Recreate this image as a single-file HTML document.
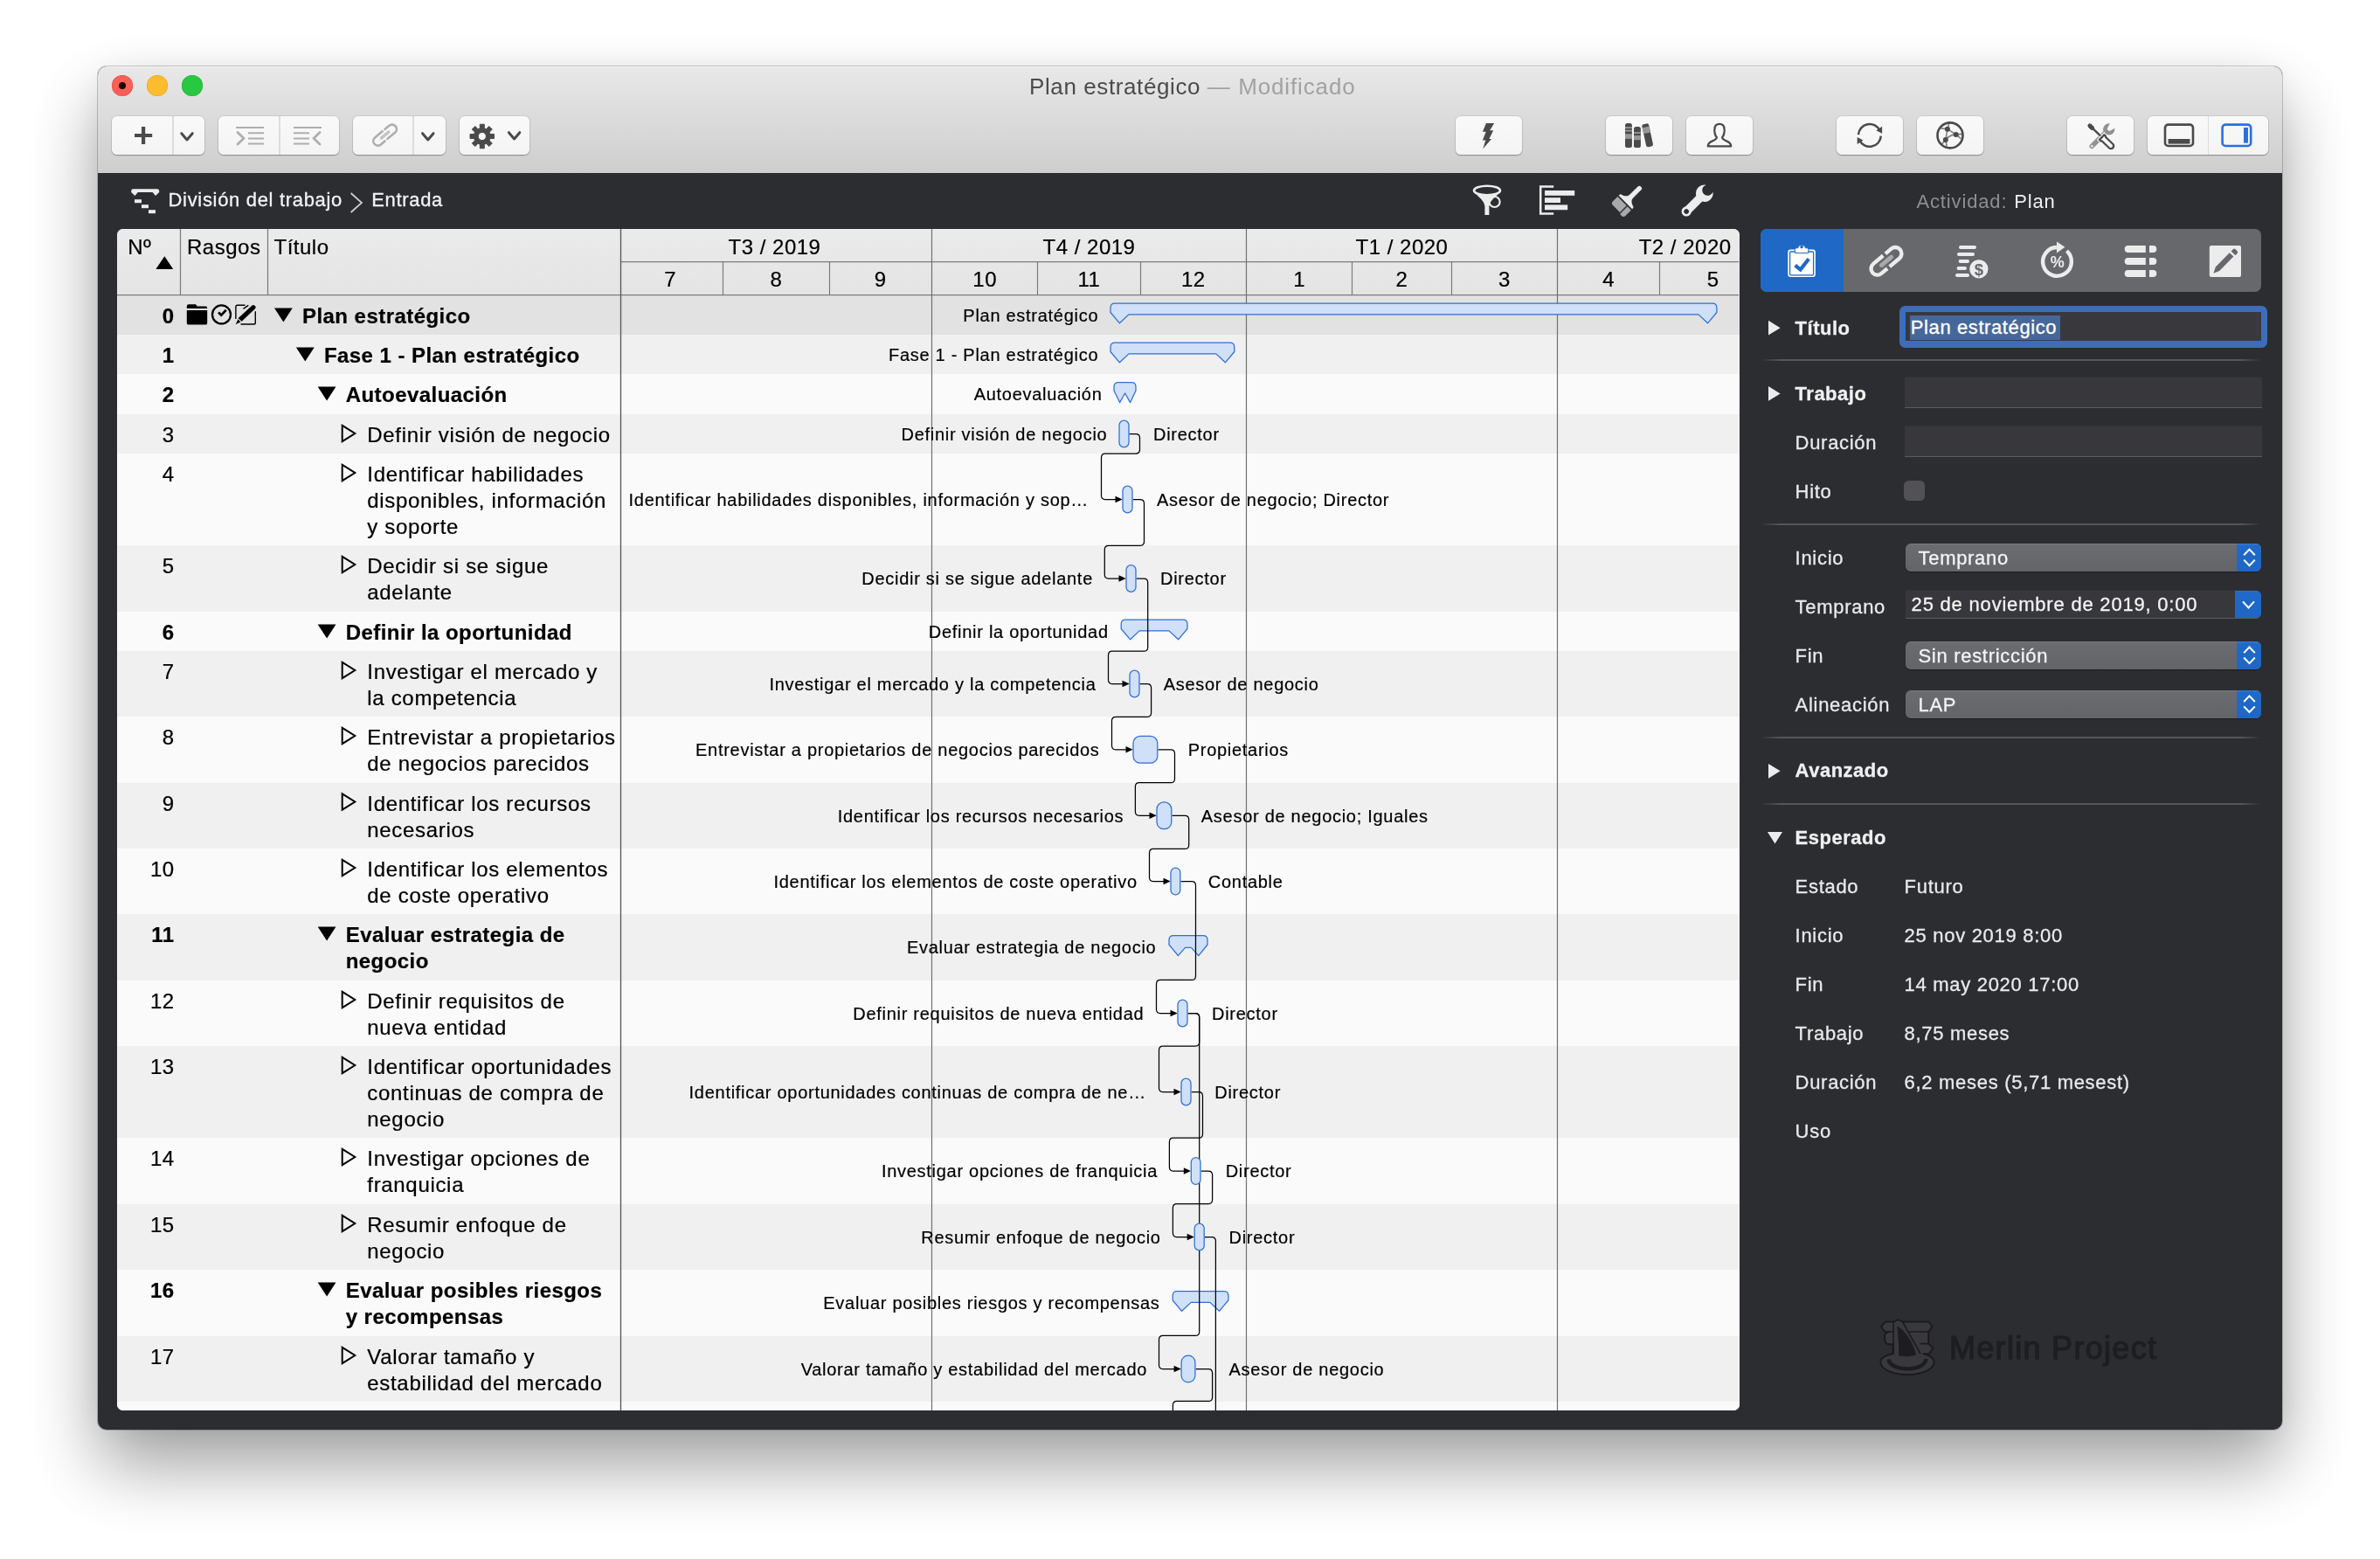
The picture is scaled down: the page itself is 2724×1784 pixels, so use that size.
<!DOCTYPE html>
<html lang="es"><head><meta charset="utf-8"><title>Plan estratégico</title>
<style>
*{box-sizing:border-box;margin:0;padding:0}
html,body{width:2724px;height:1784px;overflow:hidden;background:#fff}
body{position:relative;font-family:"Liberation Sans",sans-serif;color:#000}
.abs{position:absolute}
#root{position:absolute;left:0;top:0;width:2724px;height:1784px;opacity:.999}
#win{position:absolute;left:112px;top:76px;width:2500px;height:1560px;border-radius:10px;background:#2c2d31;
 box-shadow:0 0 0 1px rgba(0,0,0,.2),0 41px 82px rgba(0,0,0,.38),0 2px 40px rgba(0,0,0,.05);overflow:hidden}
#tb{position:absolute;left:0;top:0;width:2500px;height:122px;background:linear-gradient(#e8e8e8,#dcdcdc 45%,#cecece);border-top:1px solid #f4f4f4}
.tl{position:absolute;top:86px;width:24px;height:24px;border-radius:12px}
.title{position:absolute;top:83px;font-size:26px;color:#4b4b4b;line-height:32px;white-space:pre}
.btn{position:absolute;top:133px;height:44px;border-radius:5.8px;background:linear-gradient(#f9f9f9,#f4f4f4);box-shadow:0 0 0 1px rgba(0,0,0,.07),0 1px 1.2px rgba(0,0,0,.3)}
.btn i{position:absolute;top:0;width:1.5px;height:44px;background:#dcdcdc}
.btn svg{position:absolute;left:0;top:0}
.crumb{-webkit-text-stroke:.3px #f2f2f2;position:absolute;left:192.5px;top:215px;font-size:22px;letter-spacing:.68px;color:#f2f2f2;line-height:28px;white-space:pre}
.act{position:absolute;left:2193.5px;top:217px;font-size:22px;letter-spacing:.85px;color:#8e8e92;line-height:28px;white-space:pre}
.act b{font-weight:normal;color:#f0f0f0}
#table{position:absolute;left:134px;top:262px;width:1856.5px;height:1352px;border-radius:7px;background:#fafafa;overflow:hidden}
.row{position:absolute;left:0;width:1856.5px}
.num{-webkit-text-stroke:.22px;position:absolute;left:0;width:65.6px;text-align:right;font-size:24px;line-height:30px;letter-spacing:.4px;white-space:pre}
.ttl{-webkit-text-stroke:.22px;position:absolute;font-size:24px;line-height:29.9px;letter-spacing:.68px;white-space:pre}
.b{font-weight:bold;letter-spacing:.45px}
.hd{-webkit-text-stroke:.22px;position:absolute;font-size:24px;line-height:30px;letter-spacing:.5px;white-space:pre}
.ins{-webkit-text-stroke:.3px;position:absolute;font-size:22px;line-height:28px;letter-spacing:.7px;color:#e9e9e9;white-space:pre}
.insb{font-weight:bold;letter-spacing:.5px;color:#f0f0f0}
.sep{position:absolute;left:2015px;width:573px;height:2px;background:linear-gradient(90deg,rgba(90,90,95,0),#55555a 4%,#55555a 96%,rgba(90,90,95,0))}
.fld{position:absolute;background:#38383c;border-bottom:1.5px solid #5b5b60;border-top:1px solid #323236}
.pop{position:absolute;left:2181px;width:407px;height:32px;border-radius:6px;background:linear-gradient(#7e7f83,#6b6c70 5%,#636468);box-shadow:0 1px 1px rgba(0,0,0,.35);overflow:hidden}
.pop u{position:absolute;right:0;top:0;width:28.5px;height:32px;background:linear-gradient(#3578d6,#2069c9 8%,#1f66c4)}
.pop span{-webkit-text-stroke:.3px;position:absolute;left:14.5px;top:2.8px;font-size:22px;line-height:28px;letter-spacing:.7px;color:#f3f3f3;white-space:pre}
</style></head>
<body>
<div id="root">
<div id="win"><div id="tb"></div></div>
<div class="tl" style="left:128px;background:#fc5f57;box-shadow:inset 0 0 0 .5px #e2463f"></div>
<div class="abs" style="left:136.1px;top:94.1px;width:7.8px;height:7.8px;border-radius:4px;background:#1d0705"></div>
<div class="tl" style="left:168px;background:#fdbc2e;box-shadow:inset 0 0 0 .5px #dfa023"></div>
<div class="tl" style="left:208px;background:#28c840;box-shadow:inset 0 0 0 .5px #1dad2c"></div>
<div class="title" style="left:1178px;letter-spacing:.6px">Plan estratégico</div><div class="title" style="left:1381.8px;color:#a2a2a2">—</div><div class="title" style="left:1417.2px;letter-spacing:.86px;color:#a2a2a2">Modificado</div>
<div class="btn" style="left:128px;width:106px"><i style="left:69px"></i></div>
<div class="btn" style="left:249.5px;width:138.5px"><i style="left:69.5px"></i></div>
<div class="btn" style="left:403.7px;width:106.3px"><i style="left:68.8px"></i></div>
<div class="btn" style="left:525.7px;width:80.3px"></div>
<div class="btn" style="left:1666px;width:76px"></div>
<div class="btn" style="left:1838px;width:76px"></div>
<div class="btn" style="left:1930px;width:76px"></div>
<div class="btn" style="left:2102px;width:76px"></div>
<div class="btn" style="left:2194px;width:76px"></div>
<div class="btn" style="left:2366px;width:76px"></div>
<div class="btn" style="left:2458px;width:138.2px"><i style="left:68.7px"></i></div>
<div class="crumb">División del trabajo</div>
<div class="crumb" style="left:425.2px">Entrada</div>
<div class="act">Actividad:</div><div class="act" style="left:2305.2px;color:#f0f0f0">Plan</div>
<div id="table">
<div class="row" style="top:0;height:75px;background:linear-gradient(#ebebeb,#e4e4e4)"></div>
<div class="row" style="top:76px;height:45.5px;background:#e2e2e2"></div>
<div class="row" style="top:121px;height:45.5px;background:#f0f0f0"></div>
<div class="row" style="top:166px;height:46.5px;background:#fafafa"></div>
<div class="row" style="top:212px;height:45.5px;background:#f0f0f0"></div>
<div class="row" style="top:257px;height:105.5px;background:#fafafa"></div>
<div class="row" style="top:362px;height:76.5px;background:#f0f0f0"></div>
<div class="row" style="top:438px;height:45.5px;background:#fafafa"></div>
<div class="row" style="top:483px;height:75.5px;background:#f0f0f0"></div>
<div class="row" style="top:558px;height:76.0px;background:#fafafa"></div>
<div class="row" style="top:633.5px;height:76.0px;background:#f0f0f0"></div>
<div class="row" style="top:709px;height:75.5px;background:#fafafa"></div>
<div class="row" style="top:784px;height:76.5px;background:#f0f0f0"></div>
<div class="row" style="top:860px;height:75.5px;background:#fafafa"></div>
<div class="row" style="top:935px;height:105.5px;background:#f0f0f0"></div>
<div class="row" style="top:1040px;height:76.5px;background:#fafafa"></div>
<div class="row" style="top:1116px;height:75.5px;background:#f0f0f0"></div>
<div class="row" style="top:1191px;height:76.5px;background:#fafafa"></div>
<div class="row" style="top:1267px;height:75.5px;background:#f0f0f0"></div>
<div class="row" style="top:1342px;height:10.5px;background:#fafafa"></div>
<div class="hd" style="left:12.199999999999989px;top:6.199999999999989px">Nº</div>
<div class="hd" style="left:80px;top:6.199999999999989px">Rasgos</div>
<div class="hd" style="left:179.5px;top:6.199999999999989px">Título</div>
<div class="num b" style="top:85.2px">0</div>
<div class="ttl b" style="left:212.00000000000003px;top:85.2px">Plan estratégico</div>
<div class="num b" style="top:130.2px">1</div>
<div class="ttl b" style="left:236.9px;top:130.2px">Fase 1 - Plan estratégico</div>
<div class="num b" style="top:175.2px">2</div>
<div class="ttl b" style="left:261.7px;top:175.2px">Autoevaluación</div>
<div class="num" style="top:221.2px">3</div>
<div class="ttl" style="left:286.29999999999995px;top:221.2px">Definir visión de negocio</div>
<div class="num" style="top:266.2px">4</div>
<div class="ttl" style="left:286.29999999999995px;top:266.2px">Identificar habilidades<br>disponibles, información<br>y soporte</div>
<div class="num" style="top:371.2px">5</div>
<div class="ttl" style="left:286.29999999999995px;top:371.2px">Decidir si se sigue<br>adelante</div>
<div class="num b" style="top:447.2px">6</div>
<div class="ttl b" style="left:261.7px;top:447.2px">Definir la oportunidad</div>
<div class="num" style="top:492.2px">7</div>
<div class="ttl" style="left:286.29999999999995px;top:492.2px">Investigar el mercado y<br>la competencia</div>
<div class="num" style="top:567.2px">8</div>
<div class="ttl" style="left:286.29999999999995px;top:567.2px">Entrevistar a propietarios<br>de negocios parecidos</div>
<div class="num" style="top:642.7px">9</div>
<div class="ttl" style="left:286.29999999999995px;top:642.7px">Identificar los recursos<br>necesarios</div>
<div class="num" style="top:718.2px">10</div>
<div class="ttl" style="left:286.29999999999995px;top:718.2px">Identificar los elementos<br>de coste operativo</div>
<div class="num b" style="top:793.2px">11</div>
<div class="ttl b" style="left:261.7px;top:793.2px">Evaluar estrategia de<br>negocio</div>
<div class="num" style="top:869.2px">12</div>
<div class="ttl" style="left:286.29999999999995px;top:869.2px">Definir requisitos de<br>nueva entidad</div>
<div class="num" style="top:944.2px">13</div>
<div class="ttl" style="left:286.29999999999995px;top:944.2px">Identificar oportunidades<br>continuas de compra de<br>negocio</div>
<div class="num" style="top:1049.2px">14</div>
<div class="ttl" style="left:286.29999999999995px;top:1049.2px">Investigar opciones de<br>franquicia</div>
<div class="num" style="top:1125.2px">15</div>
<div class="ttl" style="left:286.29999999999995px;top:1125.2px">Resumir enfoque de<br>negocio</div>
<div class="num b" style="top:1200.2px">16</div>
<div class="ttl b" style="left:261.7px;top:1200.2px">Evaluar posibles riesgos<br>y recompensas</div>
<div class="num" style="top:1276.2px">17</div>
<div class="ttl" style="left:286.29999999999995px;top:1276.2px">Valorar tamaño y<br>estabilidad del mercado</div>
</div>
<div class="abs" style="left:2015px;top:262px;width:573px;height:72.3px;border-radius:7px;background:#67686c;overflow:hidden"><div class="abs" style="left:0;top:0;width:95.2px;height:73px;background:#1f68c5"></div></div>
<div class="ins insb" style="left:2054.6px;top:361.5px">Título</div>
<div class="ins insb" style="left:2054.6px;top:437.0px">Trabajo</div>
<div class="ins" style="left:2054.6px;top:493.1px">Duración</div>
<div class="ins" style="left:2054.6px;top:548.9px">Hito</div>
<div class="ins" style="left:2054.6px;top:624.6px">Inicio</div>
<div class="ins" style="left:2054.6px;top:681.0px">Temprano</div>
<div class="ins" style="left:2054.6px;top:736.5px">Fin</div>
<div class="ins" style="left:2054.6px;top:792.9px">Alineación</div>
<div class="ins insb" style="left:2054.6px;top:868.4px">Avanzado</div>
<div class="ins insb" style="left:2054.6px;top:944.9px">Esperado</div>
<div class="ins" style="left:2054.6px;top:1000.7px">Estado</div>
<div class="ins" style="left:2179.6px;top:1000.7px">Futuro</div>
<div class="ins" style="left:2054.6px;top:1056.7px">Inicio</div>
<div class="ins" style="left:2179.6px;top:1056.7px">25 nov 2019 8:00</div>
<div class="ins" style="left:2054.6px;top:1112.7px">Fin</div>
<div class="ins" style="left:2179.6px;top:1112.7px">14 may 2020 17:00</div>
<div class="ins" style="left:2054.6px;top:1168.7px">Trabajo</div>
<div class="ins" style="left:2179.6px;top:1168.7px">8,75 meses</div>
<div class="ins" style="left:2054.6px;top:1224.7px">Duración</div>
<div class="ins" style="left:2179.6px;top:1224.7px">6,2 meses (5,71 mesest)</div>
<div class="ins" style="left:2054.6px;top:1280.7px">Uso</div>
<div class="abs" style="left:2174.2px;top:350px;width:420.6px;height:48px;border-radius:6.5px;background:#3f6db6"></div>
<div class="abs" style="left:2181.2px;top:357.3px;width:406.6px;height:33.2px;background:#39393d;box-shadow:0 0 0 1.6px #2a70dc"></div>
<div class="abs" style="left:2185.7px;top:360.9px;width:172.1px;height:28.2px;background:#46679a"></div>
<div class="ins" style="left:2186.8px;top:361.2px;color:#fff;letter-spacing:.6px">Plan estratégico</div>
<div class="fld" style="left:2180px;top:431.3px;width:409px;height:35.6px"></div>
<div class="fld" style="left:2180px;top:487.4px;width:409px;height:35.6px"></div>
<div class="abs" style="left:2179.3px;top:550px;width:23.4px;height:23.4px;border-radius:5.5px;background:#525256"></div>
<div class="sep" style="top:410.7px"></div>
<div class="sep" style="top:599px"></div>
<div class="sep" style="top:843px"></div>
<div class="sep" style="top:918.8px"></div>
<div class="pop" style="top:622.4px"><span>Temprano</span><u></u></div>
<div class="pop" style="top:734.3px"><span>Sin restricción</span><u></u></div>
<div class="pop" style="top:790.2px"><span>LAP</span><u></u></div>
<div class="fld" style="left:2181px;top:675.2px;width:407px;height:32.8px;border-radius:0 6px 6px 0;overflow:hidden"><div class="abs" style="right:0;top:-1px;width:30px;height:33.5px;background:linear-gradient(#3578d6,#2069c9 8%,#1f66c4);border-radius:0 6px 6px 0"></div></div>
<div class="ins" style="left:2187.6px;top:677.9px;color:#f3f3f3;letter-spacing:.8px">25 de noviembre de 2019, 0:00</div>
<div class="abs" style="left:2231px;top:1520.5px;font-size:36px;letter-spacing:1.3px;color:#1e1e21;-webkit-text-stroke:1.25px #1e1e21;line-height:44px;white-space:pre">Merlin Project</div>
<svg class="abs" style="left:0;top:0" width="2724" height="1784" viewBox="0 0 2724 1784">
<defs><clipPath id="tc"><rect x="134" y="262" width="1856.5" height="1352" rx="7"/></clipPath></defs>
<g clip-path="url(#tc)"><path d="M314.0 352.6h20.8l-10.4 15.8z" fill="#000"/>
<path d="M338.9 397.6h20.8l-10.4 15.8z" fill="#000"/>
<path d="M363.7 442.6h20.8l-10.4 15.8z" fill="#000"/>
<path d="M391.7 486.8v18.4l14.6 -9.2z" fill="none" stroke="#000" stroke-width="2" stroke-linejoin="miter"/>
<path d="M391.7 531.8v18.4l14.6 -9.2z" fill="none" stroke="#000" stroke-width="2" stroke-linejoin="miter"/>
<path d="M391.7 636.8v18.4l14.6 -9.2z" fill="none" stroke="#000" stroke-width="2" stroke-linejoin="miter"/>
<path d="M363.7 714.6h20.8l-10.4 15.8z" fill="#000"/>
<path d="M391.7 757.8v18.4l14.6 -9.2z" fill="none" stroke="#000" stroke-width="2" stroke-linejoin="miter"/>
<path d="M391.7 832.8v18.4l14.6 -9.2z" fill="none" stroke="#000" stroke-width="2" stroke-linejoin="miter"/>
<path d="M391.7 908.3v18.4l14.6 -9.2z" fill="none" stroke="#000" stroke-width="2" stroke-linejoin="miter"/>
<path d="M391.7 983.8v18.4l14.6 -9.2z" fill="none" stroke="#000" stroke-width="2" stroke-linejoin="miter"/>
<path d="M363.7 1060.6h20.8l-10.4 15.8z" fill="#000"/>
<path d="M391.7 1134.8v18.4l14.6 -9.2z" fill="none" stroke="#000" stroke-width="2" stroke-linejoin="miter"/>
<path d="M391.7 1209.8v18.4l14.6 -9.2z" fill="none" stroke="#000" stroke-width="2" stroke-linejoin="miter"/>
<path d="M391.7 1314.8v18.4l14.6 -9.2z" fill="none" stroke="#000" stroke-width="2" stroke-linejoin="miter"/>
<path d="M391.7 1390.8v18.4l14.6 -9.2z" fill="none" stroke="#000" stroke-width="2" stroke-linejoin="miter"/>
<path d="M363.7 1467.6h20.8l-10.4 15.8z" fill="#000"/>
<path d="M391.7 1541.8v18.4l14.6 -9.2z" fill="none" stroke="#000" stroke-width="2" stroke-linejoin="miter"/>
<g stroke="#7c7c7c" stroke-width="1.25" fill="none"><path d="M134 337.5H1990.5"/><path d="M206.5 262V337.5M306.5 262V337.5"/><path d="M710.5 299.5H1990.5"/></g>
<path d="M710.5 262V1614" stroke="#5c5c5c" stroke-width="1.4"/>
<path d="M178.4 308h19.8l-9.9 -14.8z" fill="#000"/>
<path d="M213.8 350.4q0-2.1 2.1-2.1h7.4q1.2 0 1.7 1.1l.6 1.2h9.7q1.9 0 1.9 1.9v.5h-23.4zM213.8 354.9h23.4v14.8q0 1.9-1.9 1.9h-19.6q-1.9 0-1.9-1.9z" fill="#000"/>
<circle cx="253.5" cy="359.9" r="10.5" fill="none" stroke="#000" stroke-width="2.3"/><path d="M250 357.6l3.2 3 5.6-5.9" fill="none" stroke="#000" stroke-width="2.7"/>
<path d="M280.5 349.2h-8.8q-1.8 0-1.8 1.8v14M275.5 371h15q1.8 0 1.8-1.8v-13" fill="none" stroke="#000" stroke-width="1.4"/><path d="M278.5 353.3l5.8-4" stroke="#000" stroke-width="1.4"/>
<path d="M269.8 371.2l3.2-7.4 15.6-14.2q1.5-1.3 3 .2l.5.5q1.4 1.6-.1 3l-15.3 14.4z" fill="#000"/><path d="M272.4 364.6l4.6 4.4" stroke="#e2e2e2" stroke-width="1.2"/>
<path d="M1066.5 262V1614" stroke="#717171" stroke-width="1.2"/>
<path d="M1426.5 262V1614" stroke="#717171" stroke-width="1.2"/>
<path d="M1782.5 262V1614" stroke="#717171" stroke-width="1.2"/>
<path d="M827.5 299.5V337.5" stroke="#7c7c7c" stroke-width="1.2"/>
<path d="M949.5 299.5V337.5" stroke="#7c7c7c" stroke-width="1.2"/>
<path d="M1187.5 299.5V337.5" stroke="#7c7c7c" stroke-width="1.2"/>
<path d="M1305.5 299.5V337.5" stroke="#7c7c7c" stroke-width="1.2"/>
<path d="M1547.5 299.5V337.5" stroke="#7c7c7c" stroke-width="1.2"/>
<path d="M1661.5 299.5V337.5" stroke="#7c7c7c" stroke-width="1.2"/>
<path d="M1899.5 299.5V337.5" stroke="#7c7c7c" stroke-width="1.2"/>
<text x="886.5" y="290.5" text-anchor="middle" stroke="#000" stroke-width=".22" font-family="Liberation Sans, sans-serif" font-size="24" letter-spacing=".5">T3 / 2019</text>
<text x="1246.5" y="290.5" text-anchor="middle" stroke="#000" stroke-width=".22" font-family="Liberation Sans, sans-serif" font-size="24" letter-spacing=".5">T4 / 2019</text>
<text x="1604.5" y="290.5" text-anchor="middle" stroke="#000" stroke-width=".22" font-family="Liberation Sans, sans-serif" font-size="24" letter-spacing=".5">T1 / 2020</text>
<text x="1981.6" y="290.5" text-anchor="end" stroke="#000" stroke-width=".22" font-family="Liberation Sans, sans-serif" font-size="24" letter-spacing=".5">T2 / 2020</text>
<text x="767.2" y="327.5" text-anchor="middle" stroke="#000" stroke-width=".22" font-family="Liberation Sans, sans-serif" font-size="24" letter-spacing=".5">7</text>
<text x="888.5" y="327.5" text-anchor="middle" stroke="#000" stroke-width=".22" font-family="Liberation Sans, sans-serif" font-size="24" letter-spacing=".5">8</text>
<text x="1007.8" y="327.5" text-anchor="middle" stroke="#000" stroke-width=".22" font-family="Liberation Sans, sans-serif" font-size="24" letter-spacing=".5">9</text>
<text x="1127.2" y="327.5" text-anchor="middle" stroke="#000" stroke-width=".22" font-family="Liberation Sans, sans-serif" font-size="24" letter-spacing=".5">10</text>
<text x="1246.5" y="327.5" text-anchor="middle" stroke="#000" stroke-width=".22" font-family="Liberation Sans, sans-serif" font-size="24" letter-spacing=".5">11</text>
<text x="1365.8" y="327.5" text-anchor="middle" stroke="#000" stroke-width=".22" font-family="Liberation Sans, sans-serif" font-size="24" letter-spacing=".5">12</text>
<text x="1487.1" y="327.5" text-anchor="middle" stroke="#000" stroke-width=".22" font-family="Liberation Sans, sans-serif" font-size="24" letter-spacing=".5">1</text>
<text x="1604.5" y="327.5" text-anchor="middle" stroke="#000" stroke-width=".22" font-family="Liberation Sans, sans-serif" font-size="24" letter-spacing=".5">2</text>
<text x="1721.9" y="327.5" text-anchor="middle" stroke="#000" stroke-width=".22" font-family="Liberation Sans, sans-serif" font-size="24" letter-spacing=".5">3</text>
<text x="1841.3" y="327.5" text-anchor="middle" stroke="#000" stroke-width=".22" font-family="Liberation Sans, sans-serif" font-size="24" letter-spacing=".5">4</text>
<text x="1960.6" y="327.5" text-anchor="middle" stroke="#000" stroke-width=".22" font-family="Liberation Sans, sans-serif" font-size="24" letter-spacing=".5">5</text>
<path d="M1276 347.2H1959.9Q1964.9 347.2 1964.9 352.2V357.5L1954.5 369.8L1943.9 359.9H1292L1281.4 369.8L1271 357.5V352.2Q1271 347.2 1276 347.2Z" fill="#cfe0f8" stroke="#2e6fd2" stroke-width="1.25" stroke-linejoin="round"/>
<path d="M1276 392.2H1407.8Q1412.8 392.2 1412.8 397.2V402.5L1402.3999999999999 414.8L1391.8 404.9H1292L1281.4 414.8L1271 402.5V397.2Q1271 392.2 1276 392.2Z" fill="#cfe0f8" stroke="#2e6fd2" stroke-width="1.25" stroke-linejoin="round"/>
<path d="M1280 437.7H1295Q1300 437.7 1300 442.7V447.0L1293.6 460.6L1287.6 450.0L1281.6 460.6L1275 447.0V442.7Q1275 437.7 1280 437.7Z" fill="#cfe0f8" stroke="#2e6fd2" stroke-width="1.25" stroke-linejoin="round"/>
<path d="M1288.2 709.2H1354Q1359 709.2 1359 714.2V719.5L1348.6 731.8L1338 721.9H1304.2L1293.6000000000001 731.8L1283.2 719.5V714.2Q1283.2 709.2 1288.2 709.2Z" fill="#cfe0f8" stroke="#2e6fd2" stroke-width="1.25" stroke-linejoin="round"/>
<path d="M1343 1070.7H1377Q1382 1070.7 1382 1075.7V1081.0L1371.8 1093.6L1363.4 1084.4H1356.5L1348.4 1093.6L1338 1081.0V1075.7Q1338 1070.7 1343 1070.7Z" fill="#cfe0f8" stroke="#2e6fd2" stroke-width="1.25" stroke-linejoin="round"/>
<path d="M1347.2 1477.7H1400.9Q1405.9 1477.7 1405.9 1482.7V1488.0L1395.5 1500.3L1384.9 1490.4H1363.2L1352.6000000000001 1500.3L1342.2 1488.0V1482.7Q1342.2 1477.7 1347.2 1477.7Z" fill="#cfe0f8" stroke="#2e6fd2" stroke-width="1.25" stroke-linejoin="round"/>
<path d="M1292.7 496.5H1300.0Q1304.5 496.5 1304.5 501.0V514.5Q1304.5 519 1300.0 519H1265.0Q1260.5 519 1260.5 523.5V567.0Q1260.5 571.5 1265.0 571.5H1279" fill="none" stroke="#000" stroke-width="1.25"/><path d="M1284.7 571.5l-8.2 -3.7v7.4z" fill="#000"/>
<path d="M1296.7 571.5H1305.0Q1309.5 571.5 1309.5 576.0V619.8Q1309.5 624.3 1305.0 624.3H1268.8Q1264.3 624.3 1264.3 628.8V657.5Q1264.3 662.0 1268.8 662.0H1283" fill="none" stroke="#000" stroke-width="1.25"/><path d="M1288.7 662.0l-8.2 -3.7v7.4z" fill="#000"/>
<path d="M1300.7 662.0H1309.2Q1313.7 662.0 1313.7 666.5V740.7Q1313.7 745.2 1309.2 745.2H1273.0Q1268.5 745.2 1268.5 749.7V778.0Q1268.5 782.5 1273.0 782.5H1287" fill="none" stroke="#000" stroke-width="1.25"/><path d="M1292.7 782.5l-8.2 -3.7v7.4z" fill="#000"/>
<path d="M1304.7 782.5H1313.1Q1317.6 782.5 1317.6 787.0V815.8Q1317.6 820.3 1313.1 820.3H1277.0Q1272.5 820.3 1272.5 824.8V853.25Q1272.5 857.75 1277.0 857.75H1291" fill="none" stroke="#000" stroke-width="1.25"/><path d="M1296.7 857.75l-8.2 -3.7v7.4z" fill="#000"/>
<path d="M1325.5 857.75H1340.0Q1344.5 857.75 1344.5 862.25V891.2Q1344.5 895.7 1340.0 895.7H1303.9Q1299.4 895.7 1299.4 900.2V928.75Q1299.4 933.25 1303.9 933.25H1318" fill="none" stroke="#000" stroke-width="1.25"/><path d="M1323.7 933.25l-8.2 -3.7v7.4z" fill="#000"/>
<path d="M1341.5 933.25H1356.2Q1360.7 933.25 1360.7 937.75V966.9Q1360.7 971.4 1356.2 971.4H1320.0Q1315.5 971.4 1315.5 975.9V1004.0Q1315.5 1008.5 1320.0 1008.5H1334" fill="none" stroke="#000" stroke-width="1.25"/><path d="M1339.7 1008.5l-8.2 -3.7v7.4z" fill="#000"/>
<path d="M1351.5 1008.5H1364.0Q1368.5 1008.5 1368.5 1013.0V1116.9Q1368.5 1121.4 1364.0 1121.4H1328.0Q1323.5 1121.4 1323.5 1125.9V1155.0Q1323.5 1159.5 1328.0 1159.5H1342" fill="none" stroke="#000" stroke-width="1.25"/><path d="M1347.7 1159.5l-8.2 -3.7v7.4z" fill="#000"/>
<path d="M1359.7 1159.5H1368.2Q1372.7 1159.5 1372.7 1164.0V1192.5Q1372.7 1197 1368.2 1197H1331.0Q1326.5 1197 1326.5 1201.5V1245.0Q1326.5 1249.5 1331.0 1249.5H1346" fill="none" stroke="#000" stroke-width="1.25"/><path d="M1351.7 1249.5l-8.2 -3.7v7.4z" fill="#000"/>
<path d="M1359.7 1159.5H1368.2Q1372.7 1159.5 1372.7 1164.0V1523.9Q1372.7 1528.4 1368.2 1528.4H1331.0Q1326.5 1528.4 1326.5 1532.9V1562.0Q1326.5 1566.5 1331.0 1566.5H1346.1" fill="none" stroke="#000" stroke-width="1.25"/><path d="M1351.8 1566.5l-8.2 -3.7v7.4z" fill="#000"/>
<path d="M1363.7 1249.5H1372.0Q1376.5 1249.5 1376.5 1254.0V1297.7Q1376.5 1302.2 1372.0 1302.2H1342.9Q1338.4 1302.2 1338.4 1306.7V1335.5Q1338.4 1340.0 1342.9 1340.0H1357.3" fill="none" stroke="#000" stroke-width="1.25"/><path d="M1363.0 1340.0l-8.2 -3.7v7.4z" fill="#000"/>
<path d="M1374.7 1340.0H1383.1Q1387.6 1340.0 1387.6 1344.5V1373.0Q1387.6 1377.5 1383.1 1377.5H1346.9Q1342.4 1377.5 1342.4 1382.0V1411.0Q1342.4 1415.5 1346.9 1415.5H1361.2" fill="none" stroke="#000" stroke-width="1.25"/><path d="M1366.9 1415.5l-8.2 -3.7v7.4z" fill="#000"/>
<path d="M1378.9 1415.5H1386.9Q1391.4 1415.5 1391.4 1420.0V1620" fill="none" stroke="#000" stroke-width="1.25"/>
<path d="M1368.6000000000001 1566.5H1383.1Q1387.6 1566.5 1387.6 1571.0V1598.9Q1387.6 1603.4 1383.1 1603.4H1346.9Q1342.4 1603.4 1342.4 1607.9V1620" fill="none" stroke="#000" stroke-width="1.25"/>
<rect x="1281" y="481.1" width="11.0" height="30.8" rx="5.5" fill="#cfe0f8" stroke="#2e6fd2" stroke-width="1.25"/>
<rect x="1285" y="556.1" width="11.0" height="30.8" rx="5.5" fill="#cfe0f8" stroke="#2e6fd2" stroke-width="1.25"/>
<rect x="1289" y="646.6" width="11.0" height="30.8" rx="5.5" fill="#cfe0f8" stroke="#2e6fd2" stroke-width="1.25"/>
<rect x="1293" y="767.1" width="11.0" height="30.8" rx="5.5" fill="#cfe0f8" stroke="#2e6fd2" stroke-width="1.25"/>
<rect x="1297" y="842.4" width="27.8" height="30.8" rx="8" fill="#cfe0f8" stroke="#2e6fd2" stroke-width="1.25"/>
<rect x="1324" y="917.9" width="16.8" height="30.8" rx="8" fill="#cfe0f8" stroke="#2e6fd2" stroke-width="1.25"/>
<rect x="1340" y="993.1" width="10.8" height="30.8" rx="5.399999999999977" fill="#cfe0f8" stroke="#2e6fd2" stroke-width="1.25"/>
<rect x="1348" y="1144.1" width="11.0" height="30.8" rx="5.5" fill="#cfe0f8" stroke="#2e6fd2" stroke-width="1.25"/>
<rect x="1352" y="1234.1" width="11.0" height="30.8" rx="5.5" fill="#cfe0f8" stroke="#2e6fd2" stroke-width="1.25"/>
<rect x="1363.3" y="1324.6" width="10.7" height="30.8" rx="5.350000000000023" fill="#cfe0f8" stroke="#2e6fd2" stroke-width="1.25"/>
<rect x="1367.2" y="1400.1" width="11.0" height="30.8" rx="5.5" fill="#cfe0f8" stroke="#2e6fd2" stroke-width="1.25"/>
<rect x="1352.1" y="1551.1" width="15.8" height="30.8" rx="7.900000000000091" fill="#cfe0f8" stroke="#2e6fd2" stroke-width="1.25"/>
<text x="1320" y="503.7" stroke="#000" stroke-width=".2" font-family="Liberation Sans, sans-serif" font-size="20" letter-spacing=".72">Director</text>
<text x="1324" y="578.7" stroke="#000" stroke-width=".2" font-family="Liberation Sans, sans-serif" font-size="20" letter-spacing=".72">Asesor de negocio; Director</text>
<text x="1328" y="669.2" stroke="#000" stroke-width=".2" font-family="Liberation Sans, sans-serif" font-size="20" letter-spacing=".72">Director</text>
<text x="1331.7" y="789.7" stroke="#000" stroke-width=".2" font-family="Liberation Sans, sans-serif" font-size="20" letter-spacing=".72">Asesor de negocio</text>
<text x="1359.7" y="865.0" stroke="#000" stroke-width=".2" font-family="Liberation Sans, sans-serif" font-size="20" letter-spacing=".72">Propietarios</text>
<text x="1374.8" y="940.5" stroke="#000" stroke-width=".2" font-family="Liberation Sans, sans-serif" font-size="20" letter-spacing=".72">Asesor de negocio; Iguales</text>
<text x="1382.8" y="1015.7" stroke="#000" stroke-width=".2" font-family="Liberation Sans, sans-serif" font-size="20" letter-spacing=".72">Contable</text>
<text x="1387" y="1166.7" stroke="#000" stroke-width=".2" font-family="Liberation Sans, sans-serif" font-size="20" letter-spacing=".72">Director</text>
<text x="1390.3" y="1256.7" stroke="#000" stroke-width=".2" font-family="Liberation Sans, sans-serif" font-size="20" letter-spacing=".72">Director</text>
<text x="1402.7" y="1347.2" stroke="#000" stroke-width=".2" font-family="Liberation Sans, sans-serif" font-size="20" letter-spacing=".72">Director</text>
<text x="1406.5" y="1422.7" stroke="#000" stroke-width=".2" font-family="Liberation Sans, sans-serif" font-size="20" letter-spacing=".72">Director</text>
<text x="1406.5" y="1573.7" stroke="#000" stroke-width=".2" font-family="Liberation Sans, sans-serif" font-size="20" letter-spacing=".72">Asesor de negocio</text>
<text x="1257.3" y="367.7" text-anchor="end" stroke="#000" stroke-width=".2" font-family="Liberation Sans, sans-serif" font-size="20" letter-spacing=".72">Plan estratégico</text>
<text x="1257.3" y="412.7" text-anchor="end" stroke="#000" stroke-width=".2" font-family="Liberation Sans, sans-serif" font-size="20" letter-spacing=".72">Fase 1 - Plan estratégico</text>
<text x="1261.5" y="458.2" text-anchor="end" stroke="#000" stroke-width=".2" font-family="Liberation Sans, sans-serif" font-size="20" letter-spacing=".72">Autoevaluación</text>
<text x="1267.3999999999999" y="503.7" text-anchor="end" stroke="#000" stroke-width=".2" font-family="Liberation Sans, sans-serif" font-size="20" letter-spacing=".72">Definir visión de negocio</text>
<text x="1246.1" y="578.7" text-anchor="end" stroke="#000" stroke-width=".2" font-family="Liberation Sans, sans-serif" font-size="20" letter-spacing=".72">Identificar habilidades disponibles, información y sop…</text>
<text x="1251.0" y="669.2" text-anchor="end" stroke="#000" stroke-width=".2" font-family="Liberation Sans, sans-serif" font-size="20" letter-spacing=".72">Decidir si se sigue adelante</text>
<text x="1268.8" y="729.7" text-anchor="end" stroke="#000" stroke-width=".2" font-family="Liberation Sans, sans-serif" font-size="20" letter-spacing=".72">Definir la oportunidad</text>
<text x="1254.6" y="789.7" text-anchor="end" stroke="#000" stroke-width=".2" font-family="Liberation Sans, sans-serif" font-size="20" letter-spacing=".72">Investigar el mercado y la competencia</text>
<text x="1258.6" y="865.0" text-anchor="end" stroke="#000" stroke-width=".2" font-family="Liberation Sans, sans-serif" font-size="20" letter-spacing=".72">Entrevistar a propietarios de negocios parecidos</text>
<text x="1286.3" y="940.5" text-anchor="end" stroke="#000" stroke-width=".2" font-family="Liberation Sans, sans-serif" font-size="20" letter-spacing=".72">Identificar los recursos necesarios</text>
<text x="1301.8" y="1015.7" text-anchor="end" stroke="#000" stroke-width=".2" font-family="Liberation Sans, sans-serif" font-size="20" letter-spacing=".72">Identificar los elementos de coste operativo</text>
<text x="1323.3999999999999" y="1091.2" text-anchor="end" stroke="#000" stroke-width=".2" font-family="Liberation Sans, sans-serif" font-size="20" letter-spacing=".72">Evaluar estrategia de negocio</text>
<text x="1309.3999999999999" y="1166.7" text-anchor="end" stroke="#000" stroke-width=".2" font-family="Liberation Sans, sans-serif" font-size="20" letter-spacing=".72">Definir requisitos de nueva entidad</text>
<text x="1311.8999999999999" y="1256.7" text-anchor="end" stroke="#000" stroke-width=".2" font-family="Liberation Sans, sans-serif" font-size="20" letter-spacing=".72">Identificar oportunidades continuas de compra de ne…</text>
<text x="1325.1" y="1347.2" text-anchor="end" stroke="#000" stroke-width=".2" font-family="Liberation Sans, sans-serif" font-size="20" letter-spacing=".72">Investigar opciones de franquicia</text>
<text x="1328.6999999999998" y="1422.7" text-anchor="end" stroke="#000" stroke-width=".2" font-family="Liberation Sans, sans-serif" font-size="20" letter-spacing=".72">Resumir enfoque de negocio</text>
<text x="1327.6" y="1498.2" text-anchor="end" stroke="#000" stroke-width=".2" font-family="Liberation Sans, sans-serif" font-size="20" letter-spacing=".72">Evaluar posibles riesgos y recompensas</text>
<text x="1313.1" y="1573.7" text-anchor="end" stroke="#000" stroke-width=".2" font-family="Liberation Sans, sans-serif" font-size="20" letter-spacing=".72">Valorar tamaño y estabilidad del mercado</text></g>
<path d="M154 155H174.2M164.1 144.9V165.1" stroke="#4a4a4a" stroke-width="4.2" fill="none"/>
<path d="M207.8 152.70000000000002L214 159.9L220.2 152.70000000000002" fill="none" stroke="#4a4a4a" stroke-width="3" stroke-linecap="round" stroke-linejoin="round"/>
<g stroke="#aeaeae" stroke-width="2" fill="none"><path d="M270 146H302M284 152.2H302M284 158.4H302M284 164.6H302"/><path d="M272 151.5L279 158.3L272 165" stroke-width="2.8" stroke-linecap="round" stroke-linejoin="round"/></g>
<g stroke="#aeaeae" stroke-width="2" fill="none"><path d="M336 146H368M336 152.2H354M336 158.4H354M336 164.6H354"/><path d="M366 151.5L359 158.3L366 165" stroke-width="2.8" stroke-linecap="round" stroke-linejoin="round"/></g>
<g transform="translate(440.6 154.6) rotate(-40)" fill="none" stroke="#aeaeae" stroke-width="2.6"><path d="M1.6 -5.2H-10.6a5.2 5.2 0 0 0 0 10.4H-3.4"/><path d="M-1.6 5.2H10.6a5.2 5.2 0 0 0 0 -10.4H3.4"/><path d="M-5.4 0H5.4" stroke="#c4c4c4" stroke-width="3.4" stroke-linecap="round"/></g>
<path d="M483.6 152.70000000000002L489.8 159.9L496.0 152.70000000000002" fill="none" stroke="#4a4a4a" stroke-width="3" stroke-linecap="round" stroke-linejoin="round"/>
<path d="M549.38 146.71L549.24 142.24L554.36 142.24L554.22 146.71L556.65 147.72L559.72 144.46L563.34 148.08L560.08 151.15L561.09 153.58L565.56 153.44L565.56 158.56L561.09 158.42L560.08 160.85L563.34 163.92L559.72 167.54L556.65 164.28L554.22 165.29L554.36 169.76L549.24 169.76L549.38 165.29L546.95 164.28L543.88 167.54L540.26 163.92L543.52 160.85L542.51 158.42L538.04 158.56L538.04 153.44L542.51 153.58L543.52 151.15L540.26 148.08L543.88 144.46L546.95 147.72ZM556.4 156A4.6 4.6 0 1 0 547.1999999999999 156A4.6 4.6 0 1 0 556.4 156Z" fill="#4a4a4a" fill-rule="evenodd" stroke="#4a4a4a" stroke-width="1" stroke-linejoin="round"/>
<path d="M582.4 151.70000000000002L588.6 158.9L594.8000000000001 151.70000000000002" fill="none" stroke="#4a4a4a" stroke-width="3" stroke-linecap="round" stroke-linejoin="round"/>
<path d="M1701 141H1710.1L1705.2 149.3H1709.2L1704.4 159.1H1707.1L1697.3 170.3L1700.3 160.6H1696.9L1700.7 150.8H1696.9Z" fill="#4a4a4a"/>
<g fill="#4a4a4a"><rect x="1860" y="141.1" width="7.9" height="27.9" rx="2.6"/><rect x="1870" y="145" width="7.9" height="24" rx="2.6"/><rect x="1881.65" y="141.5" width="8" height="26.6" rx="2.4" transform="rotate(-12.2 1885.65 154.8)"/></g>
<g fill="#979797"><rect x="1860" y="145.2" width="7.9" height="1.8"/><rect x="1860" y="148.7" width="7.9" height="1.8"/><rect x="1860" y="153.2" width="7.9" height="5.6"/><rect x="1870" y="151.1" width="7.9" height="1.8"/><rect x="1870" y="155" width="7.9" height="5.2"/><rect x="1881.65" y="145.2" width="8" height="7" transform="rotate(-12.2 1885.65 154.8)"/></g>
<path d="M1964.9 157.2C1963.4 155.4 1962.6 153.4 1962.5 151.4C1962.1 150.4 1962.1 148.6 1962.6 147.4C1962.3 143.8 1964.6 141.9 1968 141.9C1971.4 141.9 1973.7 143.8 1973.4 147.4C1973.9 148.6 1973.9 150.4 1973.5 151.4C1973.4 153.4 1972.6 155.4 1971.1 157.2C1971.4 159.4 1973.4 160.4 1976 161.4C1979.4 162.7 1981.2 164.2 1981.2 167.4H1954.8C1954.8 164.2 1956.6 162.7 1960 161.4C1962.6 160.4 1964.6 159.4 1964.9 157.2Z" fill="none" stroke="#4a4a4a" stroke-width="2.3" stroke-linejoin="round"/>
<g fill="none" stroke="#4a4a4a" stroke-width="2.5"><path d="M2127.00 154.1A12.9 12.9 0 0 1 2151.60 149.50"/><path d="M2152.80 155.70000000000002A12.9 12.9 0 0 1 2128.20 160.30"/></g>
<path d="M2154.1 144.70000000000002V152.70000000000002L2147.3 149.3Z" fill="#4a4a4a"/><path d="M2125.7000000000003 165.1V157.1L2132.5 160.5Z" fill="#4a4a4a"/>
<g fill="none" stroke="#7d7d7d" stroke-width="1.6"><path d="M2228.9 147.8L2231 140.6M2228.9 147.8L2219.6 146.6M2228.9 147.8L2238.7 153.9M2228.9 147.8L2226.8 160.1M2238.7 153.9L2246.6 153.4M2238.7 153.9L2244.4 158.6M2226.8 160.1Q2231 154.4 2238.7 153.9M2226.8 160.1L2222.4 165M2226.8 160.1L2228.4 168.6"/></g>
<circle cx="2232" cy="154.9" r="14.5" fill="none" stroke="#4a4a4a" stroke-width="2.6"/>
<g fill="#4a4a4a"><circle cx="2228.9" cy="147.8" r="3"/><circle cx="2238.7" cy="153.9" r="3"/><circle cx="2226.8" cy="160.1" r="3"/></g>
<g transform="translate(2405.1 156.5)"><g transform="rotate(-45)"><path d="M-15.4 -2.8H6.22A6.6 6.6 0 0 1 17.6 -3.79L13.2 -2.5A2.5 2.5 0 0 0 13.2 2.5L17.6 3.79A6.6 6.6 0 0 1 6.22 2.8H-15.4A2.8 2.8 0 0 1 -15.4 -2.8Z" fill="#929292"/><circle cx="-15.2" cy="0" r="1.25" fill="#f7f7f7"/></g><g transform="rotate(43.7)"><path d="M-20.6 -1.3L-18.6 -2.5H-14L-12 -1.2H1V1.2H-12L-14 2.5H-18.6L-20.6 1.3Z" fill="#4a4a4a" stroke="#f7f7f7" stroke-width="1.6" paint-order="stroke" stroke-linejoin="round"/><path d="M0.8 -3.9H2.8L4 -3.1H15.2A3.1 3.1 0 0 1 15.2 3.1H4L2.8 3.9H0.8Z" fill="#f7f7f7" stroke="#f7f7f7" stroke-width="4.4"/><path d="M0.8 -3.9H2.8L4 -3.1H15.2A3.1 3.1 0 0 1 15.2 3.1H4L2.8 3.9H0.8Z" fill="#f7f7f7" stroke="#4a4a4a" stroke-width="2.3" stroke-linejoin="round"/></g></g>
<rect x="2478" y="142.6" width="32" height="24.4" rx="3.6" fill="none" stroke="#4a4a4a" stroke-width="2.6"/><rect x="2481.6" y="159" width="24.8" height="5.6" fill="#4a4a4a"/>
<rect x="2543.6" y="142.6" width="32.6" height="24.4" rx="3.6" fill="none" stroke="#2a70df" stroke-width="2.6"/><rect x="2568" y="146" width="5" height="17.6" fill="#2a70df"/>
<path d="M401.6 221L414 232L401.6 243" fill="none" stroke="#d0d0d0" stroke-width="1.7"/>
<path d="M152.6 216.2H179.8Q182.2 216.2 182.2 218.6V220L178 224L174.6 220H157.8L154.4 224L150.2 220V218.6Q150.2 216.2 152.6 216.2Z" fill="#ececec"/>
<rect x="154" y="228.2" width="8" height="4" fill="#ececec"/><rect x="162" y="234.2" width="8" height="4" fill="#ececec"/><rect x="170" y="240.2" width="8" height="4" fill="#ececec"/>
<ellipse cx="1702" cy="218" rx="15" ry="5.2" fill="none" stroke="#ececec" stroke-width="2.6"/>
<path d="M1688.4 220.6C1692 226 1698.6 229 1699.4 236V246H1704.4V236C1705.2 229 1712 226 1715.6 220.6C1710 223.6 1694 223.6 1688.4 220.6Z" fill="#ececec"/>
<circle cx="1710.6" cy="231" r="6" fill="none" stroke="#ececec" stroke-width="2.2"/>
<path d="M1778.2 213.4H1763.2V244.6H1778.2" fill="none" stroke="#ececec" stroke-width="2.5"/>
<rect x="1768" y="218" width="34.2" height="5.8" fill="#ececec"/><rect x="1768" y="226.2" width="18" height="5.8" fill="#ececec"/><rect x="1768" y="234.4" width="26.2" height="5.8" fill="#ececec"/>
<g transform="translate(1860.4 231.45) rotate(45)"><path d="M-10.9 0V-1.2Q-10.9 -2.6 -9.4 -3C-5 -4.2 -2.8 -6.4 -2.8 -10V-22.4A2.8 2.8 0 0 1 2.8 -22.4V-10C2.8 -6.4 5 -4.2 9.4 -3Q10.9 -2.6 10.9 -1.2V0Z" fill="#ececec"/><path d="M-10.9 1.8H3.6V12.6H-7.9Q-10.9 12.6 -10.9 9.6ZM5 1.8H10.9V11Q10.9 14 7.9 14H5Z" fill="#a9a9ab"/></g>
<g transform="translate(1951.5 220.6) rotate(-45)" fill="#ececec"><path d="M7.14 -5.46A9.8 9.8 0 1 0 7.14 5.46A6.2 6.2 0 1 1 7.14 -5.46Z"/><rect x="-30.4" y="-4.7" width="24" height="9.4"/><circle cx="-30.2" cy="0" r="5.6"/><circle cx="-30.2" cy="0" r="2.8" fill="#2c2d31"/></g>
<g><rect x="2046.3" y="285.6" width="31.6" height="31.4" rx="3" fill="#fff"/><rect x="2048.6" y="288" width="27" height="26.8" rx="1.2" fill="none" stroke="#1f68c5" stroke-width="1.3"/><path d="M2054.4 289.6v-4.2q0-1.6 1.6-1.6h1.6a4.6 4.6 0 0 1 9 0h1.6q1.6 0 1.6 1.6v4.2z" fill="#fff" stroke="#1f68c5" stroke-width="1"/><circle cx="2062.1" cy="282.6" r="1.8" fill="#1f68c5"/><path d="M2054.6 303.6l6 5 9.6-12.4" fill="none" stroke="#1f68c5" stroke-width="4.2"/></g>
<g transform="translate(2159 298.8) rotate(-40)" fill="none" stroke="#ececec" stroke-width="4.4"><path d="M1.2 -7.2H-13.4a7.2 7.2 0 0 0 0 14.4H-4.6"/><path d="M-1.2 7.2H13.4a7.2 7.2 0 0 0 0 -14.4H4.6"/><path d="M-7.4 0H7.4" stroke="#a9a9ab" stroke-width="4.8" stroke-linecap="round"/></g>
<g stroke="#ececec" stroke-width="4" stroke-linecap="round"><path d="M2244 283H2260M2242 291H2258M2243.6 299H2252M2241.6 307H2249M2240 315H2252"/></g>
<circle cx="2264.9" cy="307.8" r="11.4" fill="#ececec" stroke="#67686c" stroke-width="1.6"/><text x="2264.9" y="314.6" text-anchor="middle" font-family="Liberation Sans, sans-serif" font-weight="bold" font-size="18.5" fill="#67686c">$</text>
<path d="M2365.47 287.21A16.4 16.4 0 1 1 2353.93 283.01" fill="none" stroke="#ececec" stroke-width="4.4"/>
<path d="M2354 276.4L2363.4 282.8L2354 289.6Z" fill="#ececec"/>
<text x="2354.7" y="306.2" text-anchor="middle" font-family="Liberation Sans, sans-serif" font-weight="bold" font-size="18" fill="#ececec">%</text>
<path d="M2435.7 281H2455.8V289H2435.7a4 4 0 0 1 0 -8zM2460 281H2464.3a4 4 0 0 1 0 8H2460z" fill="#ececec"/>
<path d="M2435.7 295H2455.8V303H2435.7a4 4 0 0 1 0 -8zM2460 295H2464.3a4 4 0 0 1 0 8H2460z" fill="#ececec"/>
<path d="M2435.7 309H2455.8V317H2435.7a4 4 0 0 1 0 -8zM2460 309H2464.3a4 4 0 0 1 0 8H2460z" fill="#ececec"/>
<rect x="2528.8" y="281" width="36.2" height="36" rx="2" fill="#ececec"/><path d="M2533.4 312.8l2.4-7.2 16-16.4 4.6 4.4-16.2 16.4z M2553.6 287.4l2.2-2.2q1.4-1.2 2.8 0l2 2q1.2 1.4 0 2.8l-2.2 2.2z" fill="#67686c"/>
<path d="M2024 366.8v16.8l13.6-8.4z" fill="#ececec"/>
<path d="M2024 442.0v16.8l13.6-8.4z" fill="#ececec"/>
<path d="M2024 873.9v16.8l13.6-8.4z" fill="#ececec"/>
<path d="M2023 952h17l-8.5 13.6z" fill="#ececec"/>
<path d="M2568.2 635.2l6.3-6.6 6.3 6.6M2568.2 640.6l6.3 6.6 6.3-6.6" fill="none" stroke="#fff" stroke-width="2" stroke-linejoin="miter"/>
<path d="M2568.2 747.1l6.3-6.6 6.3 6.6M2568.2 752.5l6.3 6.6 6.3-6.6" fill="none" stroke="#fff" stroke-width="2" stroke-linejoin="miter"/>
<path d="M2568.2 803.0l6.3-6.6 6.3 6.6M2568.2 808.4l6.3 6.6 6.3-6.6" fill="none" stroke="#fff" stroke-width="2" stroke-linejoin="miter"/>
<path d="M2567 688.4l6.5 7 6.5-7" fill="none" stroke="#fff" stroke-width="2.1" stroke-linejoin="miter"/>
<path d="M2153 1518L2158 1512.4H2167.5L2172.6 1510.2L2177.5 1512.4H2207.5L2211.6 1518L2207.3 1524V1537.5L2212.6 1542.8L2207.8 1549.2H2201.5C2209 1551 2213.6 1554.5 2213.6 1558.5C2213.6 1566.8 2200 1573 2183 1573C2166 1573 2152.4 1566.8 2152.4 1558.5C2152.4 1554 2158 1550.8 2166.8 1549V1538.2H2162C2158.6 1538.2 2157 1535.4 2157 1531.2C2157 1527 2158.6 1524 2162 1524H2157.4Z" fill="#39393d" stroke="#1b1b1e" stroke-width="2" stroke-linejoin="round"/>
<path d="M2171.4 1517.2C2180 1522 2190 1536 2193 1550.4C2186 1552.6 2179 1552.6 2173 1551.2C2174 1541 2172 1527 2171.4 1517.2Z" fill="#1d1d20"/>
<path d="M2161.5 1555.5C2162.5 1562.6 2172 1566.4 2183 1566.4C2194 1566.4 2203.6 1562.6 2204.6 1555" fill="none" stroke="#1d1d20" stroke-width="4.4"/>
<path d="M2185.5 1524H2207M2197.5 1537.6H2207M2157.6 1524H2167M2167 1512.6V1549M2177.6 1512.6L2198 1549" fill="none" stroke="#1b1b1e" stroke-width="1.6"/>
</svg>
</div>
</body></html>
